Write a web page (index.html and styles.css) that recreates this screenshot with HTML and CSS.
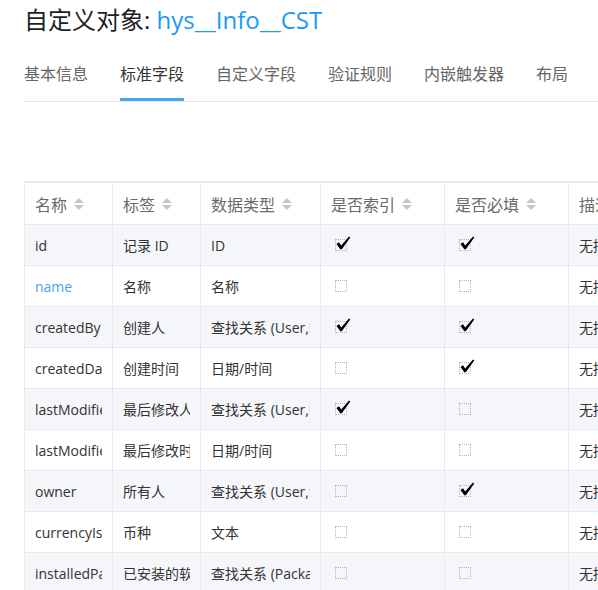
FILE: index.html
```html
<!DOCTYPE html>
<html lang="zh">
<head>
<meta charset="utf-8">
<link rel="stylesheet" href="styles.css">
</head>
<body>
<div class="page">
  <h1 class="title">自定义对象: <span class="obj">hys__Info__CST</span></h1>
  <nav class="tabs">
    <span class="tab">基本信息</span>
    <span class="tab active">标准字段</span>
    <span class="tab">自定义字段</span>
    <span class="tab">验证规则</span>
    <span class="tab">内嵌触发器</span>
    <span class="tab">布局</span>
  </nav>
  <div class="table-wrap">
    <table class="grid">
      <colgroup>
        <col class="c1"><col class="c2"><col class="c3"><col class="c4"><col class="c5"><col class="c6">
      </colgroup>
      <thead>
        <tr>
          <th><div class="th">名称<i class="sort"></i></div></th>
          <th><div class="th">标签<i class="sort"></i></div></th>
          <th><div class="th">数据类型<i class="sort"></i></div></th>
          <th><div class="th">是否索引<i class="sort"></i></div></th>
          <th><div class="th">是否必填<i class="sort"></i></div></th>
          <th><div class="th">描述</div></th>
        </tr>
      </thead>
      <tbody>
        <tr><td><div class="cell">id</div></td><td><div class="cell">记录 ID</div></td><td><div class="cell">ID</div></td><td><span class="cb on"></span></td><td><span class="cb on"></span></td><td><div class="cell">无描述</div></td></tr>
        <tr><td><div class="cell link">name</div></td><td><div class="cell">名称</div></td><td><div class="cell">名称</div></td><td><span class="cb"></span></td><td><span class="cb"></span></td><td><div class="cell">无描述</div></td></tr>
        <tr><td><div class="cell">createdBy</div></td><td><div class="cell">创建人</div></td><td><div class="cell">查找关系 (User,User)</div></td><td><span class="cb on"></span></td><td><span class="cb on"></span></td><td><div class="cell">无描述</div></td></tr>
        <tr><td><div class="cell">createdDate</div></td><td><div class="cell">创建时间</div></td><td><div class="cell">日期/时间</div></td><td><span class="cb"></span></td><td><span class="cb on"></span></td><td><div class="cell">无描述</div></td></tr>
        <tr><td><div class="cell">lastModifiedBy</div></td><td><div class="cell">最后修改人</div></td><td><div class="cell">查找关系 (User,User)</div></td><td><span class="cb on"></span></td><td><span class="cb"></span></td><td><div class="cell">无描述</div></td></tr>
        <tr><td><div class="cell">lastModifiedDate</div></td><td><div class="cell">最后修改时间</div></td><td><div class="cell">日期/时间</div></td><td><span class="cb"></span></td><td><span class="cb"></span></td><td><div class="cell">无描述</div></td></tr>
        <tr><td><div class="cell">owner</div></td><td><div class="cell">所有人</div></td><td><div class="cell">查找关系 (User,User)</div></td><td><span class="cb"></span></td><td><span class="cb on"></span></td><td><div class="cell">无描述</div></td></tr>
        <tr><td><div class="cell">currencyIsoCode</div></td><td><div class="cell">币种</div></td><td><div class="cell">文本</div></td><td><span class="cb"></span></td><td><span class="cb"></span></td><td><div class="cell">无描述</div></td></tr>
        <tr><td><div class="cell">installedPackage</div></td><td><div class="cell">已安装的软件包</div></td><td><div class="cell">查找关系 (Package,Package)</div></td><td><span class="cb"></span></td><td><span class="cb"></span></td><td><div class="cell">无描述</div></td></tr>
      </tbody>
    </table>
  </div>
</div>
</body>
</html>
```

FILE: styles.css
```css
html, body {
  margin: 0;
  padding: 0;
  overflow: hidden;
  background: #fff;
}
body {
  font-family: "Open Sans", "Noto Sans CJK SC", sans-serif;
  color: #333;
}
.page {
  padding-left: 24px;
  width: 574px;
}
.title {
  margin: 0;
  padding-top: 3px;
  height: 33px;
  line-height: 33px;
  font-size: 24px;
  font-weight: normal;
  color: #1f1f1f;
}
.obj {
  color: #1a9bf3;
}
.tabs {
  display: flex;
  gap: 32px;
  margin-top: 26px;
  border-bottom: 1px solid #e6e8ee;
}
.tab {
  font-size: 16px;
  line-height: 24px;
  color: #666;
  padding-bottom: 12px;
  border-bottom: 3px solid transparent;
}
.tab.active {
  color: #333;
  border-bottom-color: #45a9ec;
}
.table-wrap {
  margin-top: 79px;
  width: 600px;
  overflow: hidden;
}
.grid {
  border-collapse: collapse;
  table-layout: fixed;
  width: 664px;
  border-top: 2px solid #e8eaf0;
  border-left: 1px solid #e8eaf0;
}
.c1 { width: 88px; }
.c2 { width: 88px; }
.c3 { width: 120px; }
.c4 { width: 124px; }
.c5 { width: 124px; }
.c6 { width: 120px; }
.grid th, .grid td {
  border-right: 1px solid #e8eaf0;
  border-bottom: 1px solid #e8eaf0;
  padding: 0 10px;
  text-align: left;
  font-weight: normal;
}
.grid th {
  height: 41px;
  font-size: 16px;
  color: #6a6a6a;
}
.grid td {
  height: 40px;
  font-size: 14px;
  color: #333;
}
.grid tbody tr:nth-child(odd) {
  background: #f5f6f9;
}
.th {
  display: flex;
  align-items: center;
  gap: 7px;
  white-space: nowrap;
  overflow: hidden;
}
.cell {
  white-space: nowrap;
  overflow: hidden;
}
.link {
  color: #4da1ee;
}
.sort {
  display: inline-flex;
  flex-direction: column;
  gap: 2px;
  width: 10px;
}
.sort::before, .sort::after {
  content: "";
  display: block;
  width: 0;
  height: 0;
  border-left: 5px solid transparent;
  border-right: 5px solid transparent;
}
.sort::before {
  border-bottom: 5px solid #c3c6cd;
}
.sort::after {
  border-top: 5px solid #c3c6cd;
}
.cb {
  position: relative;
  display: inline-block;
  width: 10px;
  height: 10px;
  margin: 0 0 0 4px;
  border: 1px dotted #b5b5b5;
  vertical-align: middle;
  top: -2px;
}
.cb.on::after {
  content: "";
  position: absolute;
  left: 0;
  top: -4px;
  width: 15px;
  height: 14px;
  background: url("data:image/svg+xml;utf8,<svg xmlns='http://www.w3.org/2000/svg' viewBox='0 0 15 14'><path d='M0.5 8 L3 6.3 L5.2 9.6 L13 0.6 L14.3 1.6 L5.8 13.2 L4.3 13.2 Z' fill='%23000'/></svg>") no-repeat;
}
```
